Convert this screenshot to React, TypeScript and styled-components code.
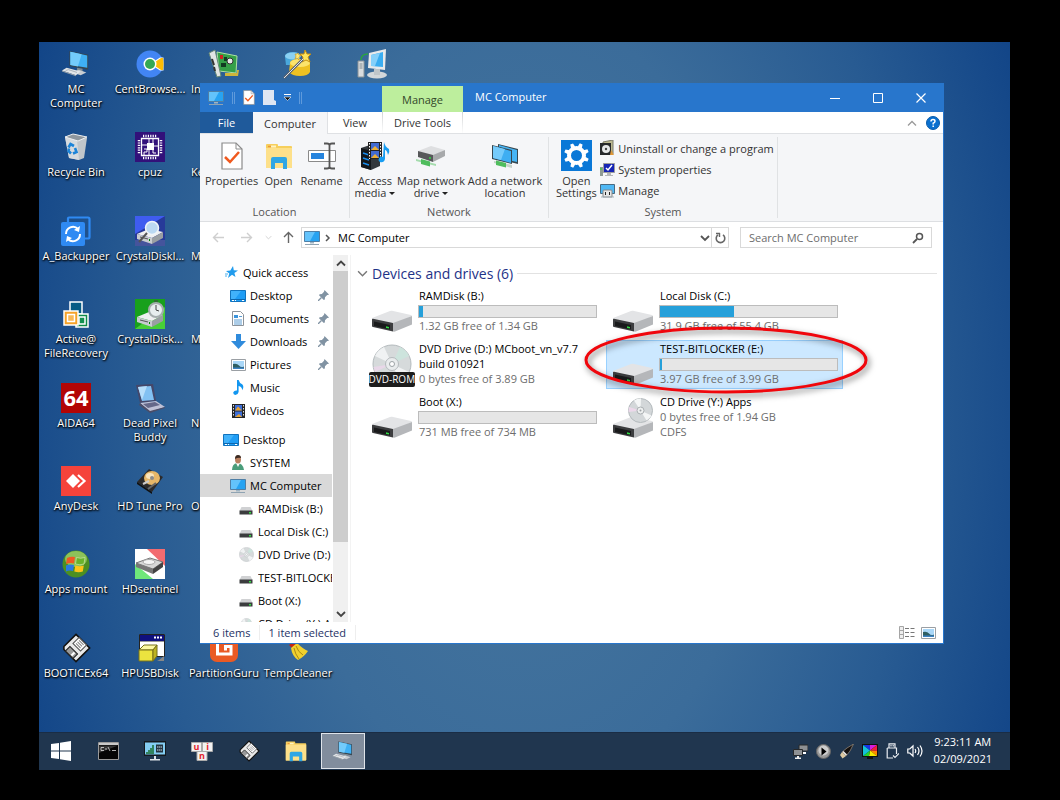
import React from 'react';
import styled, { createGlobalStyle, css } from 'styled-components';

const GlobalStyle = createGlobalStyle`
  * { box-sizing: border-box; }
  body { margin: 0; background: #000; font-family: 'Open Sans', 'Noto Sans', sans-serif; font-size: 11px; color: #000; }
  button, input { font: inherit; color: inherit; }
  button { padding: 0; border: 0; background: none; }
  svg { display: block; flex: none; }
`;

/* ---------- layout ---------- */

const Screen = styled.div`
  display: flex;
  min-height: 100vh;
  padding: 42px 50px 30px 39px;
  background: #000;
`;

const Desktop = styled.main`
  flex: 1;
  min-width: 0;
  display: flex;
  flex-direction: column;
  background: radial-gradient(ellipse 56% 120% at 50% 50%, #47779f 0%, #3b6c9a 45%, #285b92 72%, #114487 100%);
`;

const Workspace = styled.div`
  position: relative;
  flex: 1;
  display: flex;
  padding: 7px 0 16px;
`;

const IconGrid = styled.div`
  display: grid;
  grid-auto-flow: column;
  grid-auto-columns: 74px;
  grid-template-rows: repeat(8, 1fr);
`;

const Shortcut = styled.button`
  display: flex;
  flex-direction: column;
  align-items: center;
  gap: 3px;
  min-height: 0;
  overflow: visible;
`;

const ShortcutArt = styled.span`
  display: flex;
  height: 30px;
  align-items: center;
`;

const ShortcutLabel = styled.span<{ $start?: boolean }>`
  align-self: ${p => (p.$start ? 'flex-start' : 'center')};
  padding-left: ${p => (p.$start ? '4px' : '0')};
  color: #fff;
  line-height: 14px;
  text-align: center;
  white-space: pre;
  text-shadow: 0 1px 2px #000, 1px 1px 2px #000;
`;

const Explorer = styled.section`
  position: absolute;
  inset: 41px 66px 88px 161px;
  display: flex;
  flex-direction: column;
  background: #fff;
  border: solid #2876cc;
  border-width: 0 1px 1px 0;
`;

/* ---------- title bar ---------- */

const TitleBar = styled.header`
  display: flex;
  align-items: stretch;
  height: 29px;
  padding-right: 1px;
  background: #2876cc;
  color: #fff;
`;

const QuickTools = styled.div`
  display: flex;
  align-items: center;
  gap: 8px;
  width: 182px;
  padding-left: 8px;
`;

const Rule = styled.span`
  width: 3px;
  height: 12px;
  border: solid #5f9adb;
  border-width: 0 1px;
`;

const ContextTab = styled.div`
  display: flex;
  align-items: center;
  justify-content: center;
  width: 81px;
  margin-top: 3px;
  background: #bdee9d;
  color: #33482a;
`;

const WindowTitle = styled.h1`
  flex: 1;
  margin: 0;
  padding-left: 12px;
  font-size: 11px;
  font-weight: 400;
  line-height: 28px;
`;

const WindowButton = styled.button`
  display: flex;
  align-items: center;
  justify-content: center;
  width: 43px;
`;

/* ---------- ribbon ---------- */

const TabStrip = styled.nav`
  display: flex;
  height: 22px;
  border-bottom: 1px solid #dfe1e4;
`;

const Tab = styled.button<{ $kind?: 'file' | 'active' | 'context'; $width: number }>`
  width: ${p => p.$width}px;
  color: #333;
  ${p => p.$kind === 'file' && css`background: #1f5a9b; color: #fff;`}
  ${p => p.$kind === 'active' && css`
    background: #f5f6f8;
    margin-bottom: -1px;
    border-right: 1px solid #dfe1e4;
  `}
  ${p => p.$kind === 'context' && css`
    border: solid;
    border-width: 0 1px;
    border-image: linear-gradient(#d0d2d4, #fff) 1;
  `}
`;

const TabEnd = styled.div`
  display: flex;
  align-items: center;
  gap: 9px;
  margin-left: auto;
  padding-right: 3px;
`;

const Ribbon = styled.div`
  display: flex;
  height: 88px;
  padding: 3px 0;
  background: #f5f6f8;
  border-bottom: 1px solid #dddfe2;
`;

const Group = styled.section<{ $width: number }>`
  display: flex;
  flex-direction: column;
  width: ${p => p.$width}px;
  border-right: 1px solid #e0e2e4;
`;

const GroupTools = styled.div`
  flex: 1;
  display: flex;
  justify-content: center;
  padding-top: 2px;
`;

const GroupName = styled.h2`
  margin: 0;
  font-size: 11px;
  font-weight: 400;
  line-height: 12px;
  text-align: center;
  color: #555;
`;

const BigTool = styled.button<{ $width: number }>`
  display: flex;
  flex-direction: column;
  align-items: center;
  gap: 3px;
  width: ${p => p.$width}px;
  color: #333;
  line-height: 12px;
  white-space: pre;
  text-align: center;
`;

const BigArt = styled.span`
  display: flex;
  align-items: center;
  height: 33px;
`;

const ToolList = styled.div`
  display: flex;
  flex-direction: column;
  gap: 5px;
  padding-top: 1px;
`;

const SmallTool = styled.button`
  display: flex;
  align-items: center;
  gap: 3px;
  height: 16px;
  color: #333;
  white-space: nowrap;
`;

const Caret = styled.span`
  display: inline-block;
  margin: 0 0 2px 3px;
  border: solid transparent;
  border-width: 3px 3px 0;
  border-top-color: #222;
`;

/* ---------- address row ---------- */

const AddressRow = styled.div`
  display: flex;
  align-items: center;
  height: 33px;
  padding: 0 11px 2px 12px;
`;

const HistoryButtons = styled.div`
  display: flex;
  align-items: center;
  width: 89px;
`;

const HistoryButton = styled.button<{ $width: number }>`
  display: flex;
  justify-content: flex-start;
  width: ${p => p.$width}px;
`;

const AddressBox = styled.div`
  flex: 1;
  display: flex;
  align-items: center;
  height: 21px;
  padding-left: 2px;
  border: 1px solid #d9d9d9;
`;

const Crumb = styled.span`
  flex: 1;
  padding-left: 4px;
`;

const Refresh = styled.button`
  display: flex;
  align-items: center;
  justify-content: center;
  width: 17px;
  height: 19px;
  margin-left: 1px;
  border-left: 1px solid #d9d9d9;
`;

const SearchBox = styled.label`
  display: flex;
  align-items: center;
  width: 192px;
  height: 21px;
  margin-left: 11px;
  padding: 0 7px 0 8px;
  border: 1px solid #d9d9d9;
`;

const SearchInput = styled.input`
  flex: 1;
  min-width: 0;
  padding: 0;
  border: 0;
  outline: 0;
  background: none;
  &::placeholder { color: #6d6d6d; opacity: 1; }
`;

/* ---------- body ---------- */

const Body = styled.div`
  flex: 1;
  display: flex;
  min-height: 0;
`;

const NavPane = styled.nav`
  width: 132px;
  padding-top: 6px;
  overflow: hidden;
`;

const NavItem = styled.a<{ $indent: number; $selected?: boolean; $spaced?: boolean }>`
  display: flex;
  align-items: center;
  gap: 4px;
  height: 23px;
  margin-top: ${p => (p.$spaced ? '6px' : '0')};
  padding-left: ${p => p.$indent}px;
  background: ${p => (p.$selected ? '#d9d9d9' : 'transparent')};
  color: #000;
  text-decoration: none;
  white-space: nowrap;
`;

const NavArt = styled.span`
  display: flex;
  justify-content: center;
  flex: none;
  width: 16px;
`;

const NavText = styled.span`
  flex: 1;
  min-width: 0;
  overflow: hidden;
`;

const NavPin = styled.span`
  padding-right: 3px;
`;

const ScrollTrack = styled.div`
  display: flex;
  flex-direction: column;
  width: 15px;
  margin-left: 1px;
  background: #f0f0f0;
`;

const ScrollArrow = styled.button`
  display: flex;
  align-items: center;
  justify-content: center;
  height: 16px;
`;

const ScrollThumb = styled.div`
  height: 271px;
  margin-bottom: auto;
  background: #cdcdcd;
`;

const Content = styled.section`
  flex: 1;
  min-width: 0;
  margin-left: 2px;
  padding: 8px 6px 0 6px;
  border-left: 1px solid #f3f3f3;
`;

const SectionHeading = styled.h2`
  display: flex;
  align-items: center;
  gap: 4px;
  margin: 0;
  height: 20px;
  font-size: 14px;
  font-weight: 400;
  color: #1e3287;
  white-space: nowrap;
  &::after { content: ''; flex: 1; height: 1px; background: #e2e2e2; }
`;

const Tiles = styled.div`
  display: grid;
  grid-template-columns: repeat(2, 237px);
  grid-auto-rows: 49px;
  gap: 4px;
  margin: 4px 0 0 8px;
`;

const Tile = styled.article<{ $selected?: boolean }>`
  position: relative;
  display: flex;
  padding: 1px 7px 1px 5px;
  ${p => p.$selected && css`
    background: #cce8ff;
    box-shadow: inset 0 0 0 1px #99d1ff;
  `}
`;

const TileArt = styled.div`
  display: flex;
  align-items: flex-end;
  justify-content: center;
  width: 48px;
  padding: 0 5px 3px 0;
`;

const TileText = styled.div`
  flex: 1;
  min-width: 0;
  line-height: 15px;
  white-space: pre;
`;

const TileName = styled.div`
  padding-left: 1px;
`;

const TileNote = styled.div`
  padding-left: 1px;
  color: #6d6d6d;
`;

const Meter = styled.div`
  width: 179px;
  height: 13px;
  margin: 2px 0 0;
  background: #e6e6e6;
  border: 1px solid #bcbcbc;
`;

const MeterFill = styled.div`
  height: 100%;
  background: #26a0da;
`;

const DiscBadge = styled.div`
  position: relative;
  flex: none;
  width: 46px;
  height: 41px;
  display: flex;
  justify-content: center;
  align-items: flex-start;
`;

const DiscLabel = styled.span`
  position: absolute;
  left: 0;
  right: 0;
  bottom: -2px;
  height: 15px;
  border-radius: 2px;
  background: #1c1c1c;
  color: #fff;
  font-size: 10px;
  line-height: 14px;
  text-align: center;
  white-space: nowrap;
`;

const Highlight = styled.svg`
  position: absolute;
  left: -24px;
  top: -15px;
  z-index: 1;
  filter: drop-shadow(2px 3px 3px rgba(0, 0, 0, 0.55));
  pointer-events: none;
`;

const StatusBar = styled.footer`
  display: flex;
  align-items: center;
  height: 21px;
  padding: 0 7px 0 13px;
  color: #1e3265;
`;

const StatusText = styled.span`
  padding-right: 9px;
  margin-right: 8px;
  border-right: 1px solid #eee;
`;

const ViewButtons = styled.div`
  display: flex;
  gap: 6px;
  margin-left: auto;
`;

/* ---------- taskbar ---------- */

const Taskbar = styled.footer`
  display: flex;
  align-items: stretch;
  height: 38px;
  padding-bottom: 1px;
  background: #20364f;
  border-top: 1px solid #1a2d45;
`;

const TaskButtons = styled.div`
  display: flex;
  gap: 3px;
`;

const TaskButton = styled.button<{ $active?: boolean }>`
  display: flex;
  align-items: center;
  justify-content: center;
  width: 44px;
  ${p => p.$active && css`background: #818d9d; border: 1px solid #dfe4ea;`}
`;

const Tray = styled.div`
  display: flex;
  align-items: center;
  gap: 8px;
  margin-left: auto;
  padding-right: 18px;
`;

const Clock = styled.time`
  margin-left: 3px;
  padding-bottom: 3px;
  color: #fff;
  line-height: 17px;
  text-align: center;
  white-space: pre;
`;

/* ---------- drawings ---------- */

const PC = ({ size = 32 }: { size?: number }) => (
  <svg width={size} height={size} viewBox="0 0 32 32">
    <path d="M9 2 29 6v16L9 18z" fill="#37464f" />
    <path d="M10 3 28 7v13L10 17z" fill="#3fb0f4" />
    <path d="M10 3 22 5.600 18 18.700 10 17z" fill="#73cbfb" />
    <path d="M17 20l6 1v4l-6-1z" fill="#7d8990" />
    <path d="m12 25 7-3 8 3-6 3z" fill="#c8cdd2" />
    <path d="m1 23 5-3 15 4-5 4z" fill="#e2e5e8" />
    <path d="m1 23 15 5v1L1 24z" fill="#9aa3aa" />
    <path d="m5 23 3-1 9 3" fill="none" stroke="#aab1b8" />
  </svg>
);

const Monitor = ({ size = 16 }: { size?: number }) => (
  <svg width={size} height={size} viewBox="0 0 16 16">
    <path d="M.5 1.500h15v10H.5z" fill="#27a3f2" stroke="#4f7fa6" />
    <path d="M1 2h10L6 11H1z" fill="#63c3fb" />
    <path d="M6 12h4v1.500H6z" fill="#9fb4c3" />
    <path d="M1 14.500h14" stroke="#8fa3b2" />
  </svg>
);

const DeskIcon = () => (
  <svg width="16" height="16" viewBox="0 0 16 16">
    <path d="M.5 2.500h15v11H.5z" fill="#1f9df5" stroke="#1273bd" />
    <path d="M1 3h10L5 11H1z" fill="#41b2fb" />
    <path d="M1 11.500h14" stroke="#0d66ad" />
    <path d="M2 12.500h2m1 0h1m6 0h2" stroke="#fff" />
  </svg>
);

const Folder = ({ size }: { size: number }) => (
  <svg width={size} height={size} viewBox="0 0 28 28">
    <path d="M1 3q0-1 1-1h10q1 0 1 1v1h13q1 0 1 1v20q0 1-1 1H1z" fill="#f6cf5c" />
    <path d="M3 3.500h8v2H3z" fill="#fff3c2" />
    <path d="M3 3.500h3v2H3z" fill="#ef9c2e" />
    <path d="M1 6h26v19q0 1-1 1H1z" fill="#fde08a" />
    <path d="M6 27V17q0-2 2-2h12q2 0 2 2v10h-4v-6h-8v6z" fill="#2fa6e4" />
  </svg>
);

const Drive = ({ size = 42 }: { size?: number }) => (
  <svg width={size} height={size * 22 / 42} viewBox="0 0 42 22">
    <path d="M1 8 19 1q1-.5 2-.2L40 5q1 .3 1 1L22 15 1 11z" fill="#e3e4e6" />
    <path d="M22 13 41 6v8.500L24 21.500q-1 .3-2 0z" fill="#b5b7ba" />
    <path d="M1 9.500Q1 8.500 2 8.700L22 13v8.500L2 17q-1-.2-1-1z" fill="#3c3d3f" />
    <path d="M3 11.500 19 15v4.500L3 16z" fill="#191a1b" />
    <path d="M15 16.300l3 .6v1.600l-3-.6z" fill="#31d843" />
  </svg>
);

const MiniDrive = () => (
  <svg width="14" height="14" viewBox="0 0 14 14">
    <path d="M2.500 5h9l2 4h-13z" fill="#d0d1d3" />
    <path d="M.5 8.500h13v4H.5z" fill="#3b3c3e" />
    <path d="M10 10h2v1.500h-2z" fill="#35dd44" />
  </svg>
);

const Disc = ({ size }: { size: number }) => (
  <svg width={size} height={size} viewBox="0 0 40 40">
    <circle cx="20" cy="20" r="19" fill="#d6dadb" stroke="#b4babd" />
    <path d="M20 20 3 12A19 19 0 0 1 12 3z" fill="#f0f2f3" />
    <path d="M20 20 37 28a19 19 0 0 1-9 9z" fill="#f1f3f4" />
    <path d="M20 20 28 3a19 19 0 0 1 9 9z" fill="#cde4dd" />
    <path d="M20 20 3 28 1.500 23z" fill="#e8d7e8" />
    <circle cx="20" cy="20" r="6.500" fill="#e9eced" stroke="#b5babd" />
    <circle cx="20" cy="20" r="2.500" fill="#fff" stroke="#9da3a6" />
  </svg>
);

const CdDrive = () => (
  <svg width="42" height="40" viewBox="0 0 42 40">
    <g transform="translate(0 18)">
      <path d="M1 8 19 1q1-.5 2-.2L40 5q1 .3 1 1L22 15 1 11z" fill="#e3e4e6" />
      <path d="M22 13 41 6v8.500L24 21.500q-1 .3-2 0z" fill="#b5b7ba" />
      <path d="M1 9.500Q1 8.500 2 8.700L22 13v8.500L2 17q-1-.2-1-1z" fill="#3c3d3f" />
      <path d="M3 11.500 19 15v4.500L3 16z" fill="#191a1b" />
      <path d="M15 16.300l3 .6v1.600l-3-.6z" fill="#31d843" />
    </g>
    <circle cx="28.500" cy="12.500" r="12" fill="#d3d7d9" stroke="#b4babd" />
    <path d="M28.500 12.500 22 2.500a12 12 0 0 1 7-2zM28.500 12.500l6 10a12 12 0 0 0 5-5z" fill="#f4f6f6" />
    <path d="M28.500 12.500 17 9l-.5 5z" fill="#ecd8ea" />
    <circle cx="28.500" cy="12.500" r="3.500" fill="#eef0f0" stroke="#abb0b3" />
    <circle cx="28.500" cy="12.500" r="1" fill="#9ea3a6" />
  </svg>
);

const Floppy = ({ size }: { size: number }) => (
  <svg width={size} height={size} viewBox="0 0 28 28">
    <g transform="rotate(45 14 14)">
      <path d="M5 5h18v18H7l-2-2z" fill="#e9e9e9" stroke="#111" strokeWidth="1.500" />
      <path d="M9 5h10v8H9z" fill="#fff" stroke="#555" />
      <path d="M11 7h6m-6 2h6m-6 2h6" stroke="#888" />
      <path d="M9 17h10v6H9z" fill="#999" stroke="#222" />
      <path d="M15 18h2v4h-2z" fill="#fff" />
    </g>
  </svg>
);

const Recycle = () => (
  <svg width="28" height="28" viewBox="0 0 28 28">
    <path d="M3 4l22 1-3 20-5 2-10-2z" fill="#c0c6cb" />
    <path d="M3 4l12 3 2 20-10-2z" fill="#d6dbdf" />
    <path d="m3 4 8-3 14 3-9 4z" fill="#8f979e" stroke="#eef0f2" />
    <g fill="none" stroke="#1c84d8" strokeWidth="2.600">
      <path d="m6.500 14.500 2-3.500 3.500 2M13 15l1.500 4-3.500 1.500M9 20.500 6.500 18l.5-2.500" />
    </g>
  </svg>
);

const CentLogo = () => (
  <svg width="28" height="28" viewBox="0 0 28 28">
    <circle cx="14" cy="14" r="13.500" fill="#4285f4" />
    <path d="M14 14 24 7.500h3.500v13H24z" fill="#fff" />
    <path d="m19 12 6-4h2q1 6 0 12h-2l-6-4z" fill="#fbbc05" />
    <circle cx="14" cy="14" r="6.500" fill="#fff" />
    <circle cx="14" cy="14" r="5" fill="#34a853" />
  </svg>
);

const CpuLogo = () => (
  <svg width="30" height="30" viewBox="0 0 30 30">
    <path d="M0 0h30v30H0z" fill="#32117a" />
    <path d="M6.500 6.500h17v17h-17z" fill="none" stroke="#fff" strokeWidth="1.300" />
    <path d="M12 11h7v7h-7z" fill="#fff" />
    <path d="M8 4h14M8 26h14M4 8v14M26 8v14" stroke="#fff" strokeWidth="2.500" strokeDasharray="1.200 1.200" />
    <path d="M14 7v4m4-4v4M7 13h5m7 1h4M9 17h3v3H9v3m5-5v5m4-5v3h3" fill="none" stroke="#fff" />
  </svg>
);

const Backupper = () => (
  <svg width="30" height="30" viewBox="0 0 30 30">
    <path d="M7 6V2.500q0-1 1-1h19q1.500 0 1.500 1.500v18q0 1.500-1.500 1.500h-3" fill="none" stroke="#2f8af3" strokeWidth="2.200" />
    <rect y="6" width="24" height="24" rx="2" fill="#2f8af3" />
    <path d="M5 18a7 7 0 0 1 12-5M19 18a7 7 0 0 1-12 5" fill="none" stroke="#fff" strokeWidth="2" />
    <path d="m19 10-1 6-5-2zM5 26l1-6 5 2z" fill="#fff" />
  </svg>
);

const DriveShape = ({ y }: { y: number }) => (
  <g transform={`translate(2 ${y})`}>
    <path d="m0 5 12-5 14 3-11 6z" fill="#f0f0f0" />
    <path d="m0 5 15 4v6L0 10z" fill="#c9ccd0" />
    <path d="m15 9 11-6v6l-11 6z" fill="#9a9ea2" />
    <path d="m3 8 8 2" stroke="#555" />
    <path d="M12 11h1" stroke="#080" strokeWidth="2" />
  </g>
);

const CrystalInfo = () => (
  <svg width="30" height="30" viewBox="0 0 30 30">
    <path d="M0 0h30v30H0z" fill="#273a99" />
    <path d="M0 0h30L0 18z" fill="#3f5cf0" />
    <path d="M0 24h30v6H0z" fill="#45549c" />
    <DriveShape y={13} />
    <circle cx="17" cy="12" r="6.500" fill="#bcd9f2" stroke="#f0f4f8" strokeWidth="1.500" />
    <path d="m12 17-8 9" stroke="#555" strokeWidth="2" />
  </svg>
);

const CrystalMark = () => (
  <svg width="30" height="30" viewBox="0 0 30 30">
    <path d="M0 0h30v30H0z" fill="#18a01c" />
    <path d="M0 30h30V8z" fill="#48cf37" />
    <DriveShape y={13} />
    <circle cx="21" cy="11" r="7" fill="#e8eeee" stroke="#a5adad" strokeWidth="2" />
    <path d="M21 11V6m0 5 3 1M19 2h4" stroke="#444" />
  </svg>
);

const ActiveFile = () => (
  <svg width="30" height="30" viewBox="0 0 30 30" stroke="#fff" strokeWidth="1.500">
    <path d="M9 3h12v12H9z" fill="#075c85" />
    <path d="M15 15h12v13H15z" fill="#108a48" />
    <path d="M18 18h6v7h-6z" fill="#138f50" />
    <path d="M3 12h14v14H3z" fill="#f5a32a" />
    <path d="M6.500 15.500h7v7h-7z" fill="#f8b857" />
  </svg>
);

const Aida = () => (
  <svg width="30" height="30" viewBox="0 0 30 30">
    <path d="M0 0h30v30H0z" fill="#b30505" />
    <text x="15" y="23" textAnchor="middle" fontSize="22" fontWeight="700" fontFamily="Open Sans, sans-serif" fill="#fff">64</text>
  </svg>
);

const Laptop = () => (
  <svg width="30" height="30" viewBox="0 0 30 30">
    <path d="m1 2 17-1 3 17L5 20z" fill="#454769" />
    <path d="m3 4 13-1 3 14-12 1z" fill="#82c1f3" />
    <path d="m3 4 9-1-5 14z" fill="#b7defb" />
    <path d="m5 20 16-2 9 6-15 5z" fill="#bfc1d6" />
    <path d="m8 21 12-2 5 3-12 3z" fill="#656889" />
    <path d="m5 20 10 8v2L4 22zM15 28l15-4v1l-15 5z" fill="#4b4d68" />
  </svg>
);

const AnyDesk = () => (
  <svg width="30" height="30" viewBox="0 0 30 30">
    <path d="M0 0h30v30H0z" fill="#f5433b" />
    <path d="m12 8 7 7-7 7-7-7z" fill="#fff" />
    <path d="m17 9 6.500 6-6.500 6" fill="none" stroke="#fff" strokeWidth="2.200" />
  </svg>
);

const HardDisk = () => (
  <svg width="28" height="28" viewBox="0 0 28 28">
    <path d="M13 2 27 10 16 25 1 15z" fill="#2c2a2a" />
    <path d="m1 15 15 10v2L1 17z" fill="#111" />
    <ellipse cx="16" cy="11" rx="8" ry="7" fill="#e7b768" />
    <ellipse cx="14" cy="9" rx="4" ry="3" fill="#fae5bd" />
    <circle cx="16" cy="11" r="2" fill="#8b8b8b" />
    <path d="m7 17 6-3" stroke="#ccc" strokeWidth="2" />
    <path d="m12 22 8-6" stroke="#666" strokeWidth="2" />
  </svg>
);

const WinOrb = () => (
  <svg width="28" height="28" viewBox="0 0 28 28">
    <circle cx="14" cy="14" r="13.500" fill="#4c8f22" />
    <ellipse cx="14" cy="9" rx="11" ry="8" fill="#8dc25a" />
    <path d="M5 8q4-2 8-1l-1 6.500q-4-1-8 .5z" fill="#ee5a24" />
    <path d="M14.500 7.500q4 1.500 8.500 0L22 14q-4 1.500-8.500 0z" fill="#69b32c" stroke="#d8efb8" strokeWidth=".6" />
    <path d="M4 15.500q4-1.500 8-.5l-1 6q-4-1-7 .5z" fill="#2a7ae2" />
    <path d="M13.300 15.500q4 1.500 8.500 0l-1 6q-4 1.500-8.500 0z" fill="#fcc419" />
  </svg>
);

const Sentinel = () => (
  <svg width="30" height="30" viewBox="0 0 30 30">
    <path d="M0 0h30v30H0z" fill="#fff" />
    <path d="M12 0h18v17z" fill="#f26b70" />
    <path d="M0 15v15h18z" fill="#6fe77a" />
    <path d="m1 14 14-5 13 4-10 7z" fill="#d8d8d8" stroke="#777" />
    <path d="m1 14 17 6v5L1 18z" fill="#777" />
    <path d="m18 20 10-7v5l-10 7z" fill="#444" />
    <ellipse cx="14" cy="13" rx="6" ry="2.500" fill="#f5f5f5" stroke="#aaa" />
  </svg>
);

const UsbDisk = () => (
  <svg width="30" height="30" viewBox="0 0 30 30">
    <path d="M4.500 1.500h25v22h-25z" fill="#fff" stroke="#222" />
    <path d="M5 2h24v6H5z" fill="#10107e" />
    <path d="M19 4.500h8" stroke="#fff" strokeWidth="2" strokeDasharray="2 1" />
    <path d="M5 8.500h24" stroke="#999" />
    <path d="m4 17 5-5h13l-4 5z" fill="#fdf9a4" stroke="#77701a" />
    <path d="M4 17h14v11H4z" fill="#ece33f" stroke="#77701a" />
    <path d="m18 17 4-5v11l-4 5z" fill="#bcb323" stroke="#77701a" />
    <path d="M24 27l5-4v5h-7z" fill="#888" />
  </svg>
);

const NicCard = () => (
  <svg width="32" height="30" viewBox="0 0 32 30">
    <path d="m9 3 20 4-1 17-17-2z" fill="#35a048" stroke="#aee0a5" />
    <path d="m1 4 6-3 6 26-4 1z" fill="#e1e5e4" stroke="#687" />
    <path d="M4 10l2 6M6 18l1 4" stroke="#333" strokeWidth="2" />
    <circle cx="22" cy="12" r="3" fill="#e8e8e8" stroke="#333" />
    <path d="M12 6h3v4h-3z" fill="#c22" />
    <path d="M16 8h3v4h-3zM13 14h5v4h-5z" fill="#123b22" />
    <path d="M17 24h12v-3h2l-1 6H17z" fill="#d0b53b" />
  </svg>
);

const Wizard = () => (
  <svg width="30" height="30" viewBox="0 0 30 30">
    <path d="M2 8q0-5 8-5t7 5v8H3z" fill="#49a8dc" />
    <ellipse cx="10" cy="7" rx="8" ry="3.500" fill="#8bd1f3" />
    <path d="M7 14q0-4 10-4t10 4v9q-2 4-10 4T6 23z" fill="#eec122" />
    <ellipse cx="17" cy="14" rx="10" ry="4" fill="#fbe36b" />
    <path d="m22 1 2 4 4 0-3 3 2 5-4-2-4 2 1-5-3-3 4 0z" fill="#fde55c" stroke="#c78f12" />
    <path d="m15 4 1 2 2 .5-2 1.500v3l-2-2-2 1 1-3-1-2h2z" fill="#ffe975" stroke="#c78f12" strokeWidth=".6" />
    <path d="M20 10 1 29" stroke="#5b6471" strokeWidth="2.500" />
    <path d="M20 10 1 29" stroke="#dfe4ea" />
  </svg>
);

const NetPC = () => (
  <svg width="30" height="30" viewBox="0 0 30 30">
    <path d="M1 12h6v16H1z" fill="#dadddf" stroke="#8a9297" />
    <path d="M2.500 15h3m-3 2h3m-3 2h3" stroke="#828b91" />
    <path d="M4 11q0-6 7-6" fill="none" stroke="#2aa442" strokeWidth="1.500" />
    <path d="m12 4 17-4-1 21-17-2z" fill="#e7e9eb" />
    <path d="m14 6 12-3v15l-12-1z" fill="#3aadf1" />
    <path d="m14 6 9-2-5 13h-4z" fill="#85d0fa" />
    <ellipse cx="20" cy="26" rx="10" ry="3.500" fill="#d3d7da" />
    <path d="M17 20h6v6h-6z" fill="#bfc5c9" />
  </svg>
);

const GuruLogo = () => (
  <svg width="28" height="28" viewBox="0 0 28 28">
    <rect width="28" height="28" rx="7" fill="#ea5a24" />
    <path d="M12 6H7.500v14H21v-7.500h-5.500v4M15.500 6.500H21v2.500" fill="none" stroke="#fff" strokeWidth="3" />
  </svg>
);

const Broom = () => (
  <svg width="30" height="30" viewBox="0 0 30 30">
    <path d="m1 3 9 9" stroke="#b6732b" strokeWidth="3" />
    <path d="m6 12 5-4 5 4-5 5z" fill="#c22719" />
    <path d="m8 15 6-5q6 6 11 8-4 6-10 9-6-4-7-12z" fill="#f0d02d" />
    <path d="M11 15q1 6 5 11M13 13q2 6 7 9" stroke="#a98713" fill="none" />
  </svg>
);

const PropsPage = ({ w = 22, h = 28 }: { w?: number; h?: number }) => (
  <svg width={w} height={h} viewBox="0 0 22 28">
    <path d="M1 1h14l6 6v20H1z" fill="#fff" stroke="#8b8b8b" strokeWidth="1.200" />
    <path d="M15 1v6h6" fill="none" stroke="#8b8b8b" />
    <path d="m4 15 5 5 9-10" fill="none" stroke="#f0591e" strokeWidth="2.500" />
  </svg>
);

const BlankPage = () => (
  <svg width="13" height="15" viewBox="0 0 13 15">
    <path d="M0 0h11v10l2 1v4H0z" fill="#dfe6f2" />
  </svg>
);

const RenameArt = () => (
  <svg width="28" height="28" viewBox="0 0 28 28">
    <path d="M.5 8.500h27v11H.5z" fill="#fff" stroke="#8a8a8a" />
    <path d="M3 11h13v6H3z" fill="#2684dd" />
    <path d="M16 1.500h3q2.500 0 2.500 2v21q0 2-2.500 2h-3M27 1.500h-3q-2.500 0-2.500 2M27 26.500h-3q-2.500 0-2.500-2" fill="none" stroke="#555" strokeWidth="1.800" />
  </svg>
);

const MediaArt = () => (
  <svg width="30" height="30" viewBox="0 0 30 30">
    <path d="m1 7 9-3 10 3v18l-9 4-10-3z" fill="#33383d" />
    <path d="m1 7 10 3v19L1 26z" fill="#14181c" />
    <path d="m3 12 6 2m-6 3 6 2m-6 3 6 2" stroke="#188dee" strokeWidth="1.500" />
    <path d="M8 1h14v17H8z" fill="#222" />
    <path d="M11 2h8v7h-8zm0 8h8v7h-8z" fill="#416bd2" />
    <path d="m11 9 4-4 4 4zm0 8 4-4 4 4z" fill="#ecaf35" />
    <path d="M9.500 2v16m11-16v16" stroke="#fff" strokeDasharray="1.500 1.500" />
    <path d="M24 1q1 5 5 7 1 3-1 6-1-5-3-5v9q-1 4-5 3-3-2 0-5 2-1 3 0z" fill="#179df2" />
  </svg>
);

const NetDrive = () => (
  <svg width="30" height="24" viewBox="0 0 30 24">
    <path d="m2 7 13-5 14 4-12 6z" fill="#dedfe1" />
    <path d="m17 11 12-5v6l-12 6z" fill="#a7a9ab" />
    <path d="m2 7 15 4v7L2 13z" fill="#57585a" />
    <path d="M13 14h2" stroke="#31d843" strokeWidth="1.500" />
    <path d="m0 15 20 5v2L0 17z" fill="#a5dcae" />
    <path d="m5 15 9 2.500v5L5 20z" fill="#4fbd5d" />
  </svg>
);

const NetPlace = () => (
  <svg width="28" height="26" viewBox="0 0 28 26">
    <path d="m7 1 20 5v15L7 16z" fill="#37474f" />
    <path d="m8 2 18 5v12L8 15z" fill="#46b4f4" />
    <path d="m1 2 20 5v14L1 16z" fill="#37474f" />
    <path d="m2 3 18 5v12L2 15z" fill="#3eaef2" />
    <path d="m2 3 12 3-4 11-8-2z" fill="#75cbfb" />
    <path d="m3 18 18 4v3L3 20z" fill="#c6d2c9" />
    <path d="m5 17.500 10 2.500v4.500L5 22z" fill="#4fbd5d" />
  </svg>
);

const SettingsArt = () => (
  <svg width="31" height="31" viewBox="0 0 31 31">
    <path d="M0 0h31v31H0z" fill="#0a78d7" />
    <circle cx="15.500" cy="15.500" r="7.500" fill="none" stroke="#fff" strokeWidth="4" />
    <g fill="#fff">
      {[0, 45, 90, 135, 180, 225, 270, 315].map(a => (
        <path key={a} d="M13.300 7l.7-4h3l.7 4z" transform={`rotate(${a + 22} 15.500 15.500)`} />
      ))}
    </g>
  </svg>
);

const UninstallArt = () => (
  <svg width="15" height="16" viewBox="0 0 15 16">
    <path d="M3 2 13 0v14H3z" fill="#bcb98f" stroke="#7b7b6b" />
    <path d="M0 3h11v12H0z" fill="#26282a" />
    <circle cx="6" cy="9" r="4" fill="#e6e8e9" />
    <circle cx="6" cy="9" r="1.200" fill="#444" />
    <path d="m11 10 3 5h-4z" fill="#df9838" />
  </svg>
);

const SysPropsArt = () => (
  <svg width="15" height="15" viewBox="0 0 15 15">
    <path d="M3.500 1.500h11v9h-11z" fill="#1624b5" stroke="#9d9d9d" />
    <path d="m6 6 2 2 4-5" fill="none" stroke="#fff" strokeWidth="1.500" />
    <path d="M7 11h4v2h2v1H5v-1h2z" fill="#b4b6b8" />
    <path d="M0 5h3v9H0z" fill="#8e9a93" />
    <path d="M1 6v2" stroke="#2d2" />
  </svg>
);

const ManageArt = () => (
  <svg width="15" height="15" viewBox="0 0 15 15">
    <path d="M.5 1.500h14v9H.5z" fill="#4fb8f5" stroke="#4b6a80" />
    <path d="M3 8q0-1 1-1h7q1 0 1 1v6H3z" fill="#e6e6e6" stroke="#888" />
    <path d="M5 9h1v3H5zm4 0h1v3H9z" fill="#222" />
    <path d="M1 14h13" stroke="#a8b3bb" />
  </svg>
);

const Chevron = ({ dir, color, w = 10, weight = 1.3 }: { dir: 'up' | 'down'; color: string; w?: number; weight?: number }) => {
  const d = { up: 'M1 7.500 5 3.500 9 7.500', down: 'M1 3 5 7 9 3' }[dir];
  return (
    <svg width={w} height={w} viewBox="0 0 10 10">
      <path d={d} fill="none" stroke={color} strokeWidth={weight} />
    </svg>
  );
};

const Arrow = ({ turn, color }: { turn: number; color: string }) => (
  <svg width="13" height="13" viewBox="0 0 13 13">
    <path d="M12 6.500H1.500M6 2 1.500 6.500 6 11" fill="none" stroke={color} strokeWidth="1.400" transform={`rotate(${turn} 6.500 6.500)`} />
  </svg>
);

const HelpArt = () => (
  <svg width="14" height="14" viewBox="0 0 14 14">
    <circle cx="7" cy="7" r="6.500" fill="#0a70cf" stroke="#0a5caa" />
    <path d="M5 5.500q0-2 2-2t2 1.700Q9 6.500 7.200 7.200V8.500M7.200 9.500V11" fill="none" stroke="#fff" strokeWidth="1.500" />
  </svg>
);

const RefreshArt = () => (
  <svg width="11" height="12" viewBox="0 0 11 12">
    <path d="M8 2.800A4.300 4.300 0 1 1 3 2.800" fill="none" stroke="#666" strokeWidth="1.600" />
    <path d="M4.500 1v4M1 1.500h4" fill="none" stroke="#666" strokeWidth="1.400" />
  </svg>
);

const SearchArt = () => (
  <svg width="12" height="12" viewBox="0 0 12 12">
    <circle cx="7.500" cy="4.500" r="3" fill="none" stroke="#555" strokeWidth="1.500" />
    <path d="M5 7 1 11" stroke="#555" strokeWidth="1.800" />
  </svg>
);

const StarArt = () => (
  <svg width="13" height="13" viewBox="0 0 13 13">
    <path d="m8 0 .8 4.200 4.200.3-3.600 2.400L10.500 11 7 8.700 3 12l1.300-4.600L1 5l4.300-.4z" fill="#219ced" />
    <path d="M0 8h3M0 10h2" stroke="#4ab0ef" />
  </svg>
);

const DocArt = () => (
  <svg width="12" height="15" viewBox="0 0 12 15">
    <path d="M.5.500h8l3 3v11H.5z" fill="#fff" stroke="#8c9299" />
    <path d="M2 4h4v3H2z" fill="#3c94dc" />
    <path d="M7 5.500h3M2 9h8M2 11h8M2 13h8" stroke="#5a9bd1" />
  </svg>
);

const DownArt = () => (
  <svg width="15" height="15" viewBox="0 0 15 15">
    <path d="M5 0h5v7h5l-7.500 8L0 7h5z" fill="#2f8bdc" />
  </svg>
);

const PictureArt = () => (
  <svg width="15" height="12" viewBox="0 0 15 12">
    <path d="M.5.500h14v11H.5z" fill="#fff" stroke="#9a9fa4" />
    <path d="M2 2h11v8H2z" fill="#a9d7f8" />
    <path d="M2 5q4-1 6 1.500t5 1V10H2z" fill="#2f5f63" />
    <path d="M2 8.500h11V10H2z" fill="#3c83c4" />
  </svg>
);

const NoteArt = () => (
  <svg width="11" height="15" viewBox="0 0 11 15">
    <path d="M4 0h1.600q.8 3 3.600 4.300 2.300 2.500 0 6Q9.300 7 5.600 6v6q-.5 2.800-3.300 3Q0 14.500.3 12.300 1.500 10 4 10.500z" fill="#1296f0" />
  </svg>
);

const FilmArt = () => (
  <svg width="13" height="14" viewBox="0 0 13 14">
    <path d="M0 0h13v14H0z" fill="#252525" />
    <path d="M3 1h7v5.500H3zM3 7.500h7V13H3z" fill="#3e6fd8" />
    <path d="m3 6.500 3-4 4 4zM3 13l4-3 3 3z" fill="#e7a22e" />
    <path d="M1.500 1v12m10-12v12" stroke="#ddd" strokeDasharray="1.500 1.500" />
  </svg>
);

const UserArt = () => (
  <svg width="12" height="15" viewBox="0 0 12 15">
    <path d="M0 15q0-6 5-7 6 0 7 7z" fill="#4a9d7b" />
    <path d="m4 8 2 4 2-4z" fill="#fff" />
    <ellipse cx="6" cy="4.500" rx="3" ry="4" fill="#b97f5f" />
    <path d="M3 4q0-4 3-4t3 3Q6 2 3 4z" fill="#3b2a22" />
  </svg>
);

const PinArt = () => (
  <svg width="11" height="11" viewBox="0 0 11 11">
    <path d="m6.500 0 4.500 4.500-1 .6-.8-.1L7 7.200 6.800 9.500l-1 .5L1 5.200l.6-1 2.300-.2L6 1.800z" fill="#8193a3" />
    <path d="M3.500 7.500 0 11" stroke="#8193a3" strokeWidth="1.300" />
  </svg>
);

const ListView = () => (
  <svg width="16" height="13" viewBox="0 0 16 13">
    <path d="M.5.500h4v12h-4zM.5 4.500h4m-4 4h4" fill="#eee" stroke="#a5a5a5" />
    <path d="M6 2.500h10M6 6.500h10M6 10.500h10" stroke="#777" strokeDasharray="4 1.500" />
  </svg>
);

const StartArt = () => (
  <svg width="20" height="20" viewBox="0 0 20 20" fill="#fff">
    <path d="M0 3 8 2v7.500H0zM9 1.800 20 0v9.500H9zM0 10.500h8V18l-8-1zM9 10.500h11V20L9 18.200z" />
  </svg>
);

const ConsoleArt = () => (
  <svg width="21" height="18" viewBox="0 0 21 18">
    <path d="M.5.500h20v17H.5z" fill="#050505" stroke="#9a9a9a" />
    <path d="M1 1h19v2H1z" fill="#c9c9c9" />
    <path d="M1 3.500h19L1 11z" fill="#333" />
    <path d="M6 5.500H3v3h3M8 6v2M10 5l2 4M14 8.500h4" fill="none" stroke="#ddd" strokeWidth=".8" />
  </svg>
);

const PerfArt = () => (
  <svg width="22" height="20" viewBox="0 0 22 20">
    <path d="M0 0h22v15H0z" fill="#14191e" />
    <path d="M1 1.500h20v12H1z" fill="#83cdf2" />
    <path d="M3 13v-2M5 13V9M7 13V7M9 13V4" stroke="#176c2e" strokeWidth="1.500" />
    <path d="M12 3.500h7v8h-7z" fill="#243440" />
    <path d="M13 6h5m-5 3h5" stroke="#c9dce8" strokeDasharray="1.500 .5" />
    <path d="M10 15h2v3h4v1.500H6V18h4z" fill="#dce2e7" />
  </svg>
);

const KeysArt = () => (
  <svg width="22" height="19" viewBox="0 0 22 19" fontFamily="Open Sans, sans-serif" fontWeight="700" fontSize="9" fill="#e2262c" textAnchor="middle">
    <path d="M.5.500h10v9H.5zM11.500.500h10v9h-10zM6 9.500h10v9H6z" fill="#f2f2f2" stroke="#aaa" />
    <text x="5.500" y="7.500">u</text>
    <text x="16.500" y="8">i</text>
    <text x="11" y="16.500">n</text>
  </svg>
);

const TrayNet = () => (
  <svg width="15" height="15" viewBox="0 0 15 15">
    <path d="M6 1h9v6H6z" fill="#8d9093" stroke="#26282a" />
    <path d="M9 8h4v2H9z" fill="#fff" />
    <path d="M.5 5.500h9v6h-9z" fill="#8d9093" stroke="#26282a" />
    <path d="M4 12h2v1.500h2V15H2v-1.500h2z" fill="#eee" />
  </svg>
);

const TrayPlay = () => (
  <svg width="15" height="15" viewBox="0 0 15 15">
    <circle cx="7.500" cy="7.500" r="7" fill="#999" stroke="#666" />
    <circle cx="7.500" cy="6.500" r="5" fill="#ccc" />
    <path d="m5.500 3.500 5 4-5 4z" fill="#000" />
  </svg>
);

const TrayPlug = () => (
  <svg width="15" height="15" viewBox="0 0 15 15">
    <path d="m14.500 0-1 2-2.500 5-4 5-4-4 5-4z" fill="#14100e" stroke="#8e8273" strokeWidth=".8" />
    <path d="m3 8 4 4-3.500 2.500L1 11z" fill="#dcc9a2" />
    <path d="m4 7.500 3.500 3.500" stroke="#f2f2f2" strokeWidth="1.500" />
  </svg>
);

const TrayColor = () => (
  <svg width="16" height="15" viewBox="0 0 16 15">
    <path d="M0 0h16v13H0zM5 13h6v2H5z" fill="#111" />
    <path d="M8 6.500 1 1h7z" fill="#1833e6" />
    <path d="M8 6.500V1h7z" fill="#d71ce0" />
    <path d="m8 6.500 7-5.500v6z" fill="#f0203e" />
    <path d="m8 6.500 7 .5v5z" fill="#ff8a00" />
    <path d="m8 6.500 7 5.500H7z" fill="#f7e800" />
    <path d="M8 6.500 7 12H1z" fill="#25d430" />
    <path d="M8 6.500 1 12V1z" fill="#14c3d8" />
  </svg>
);

const TrayUsb = () => (
  <svg width="13" height="16" viewBox="0 0 13 16" fill="none" stroke="#e9edf2" strokeWidth="1.200">
    <path d="M3 5V.8h6V5M1.200 5h9.300v6M1.200 5v10H7M5 2v1.500M7.200 2v1.500" />
    <path d="m7 12.500 2 2 4-4" />
  </svg>
);

const TraySound = () => (
  <svg width="16" height="14" viewBox="0 0 16 14" fill="none" stroke="#fff" strokeWidth="1.200">
    <path d="M.8 5h2L6 2v10L2.800 9h-2zM8 5q1.500 2 0 4M10.500 3q3 4 0 8M13 1.500q4 5.500 0 11" />
  </svg>
);

/* ---------- data ---------- */

type Entry = { label: string; art?: React.ReactNode; start?: boolean };

const shortcuts: Entry[] = [
  { label: 'MC\nComputer', art: <PC size={30} /> },
  { label: 'Recycle Bin', art: <Recycle /> },
  { label: 'A_Backupper', art: <Backupper /> },
  { label: 'Active@\nFileRecovery', art: <ActiveFile /> },
  { label: 'AIDA64', art: <Aida /> },
  { label: 'AnyDesk', art: <AnyDesk /> },
  { label: 'Apps mount', art: <WinOrb /> },
  { label: 'BOOTICEx64', art: <Floppy size={30} /> },
  { label: 'CentBrowse...', art: <CentLogo /> },
  { label: 'cpuz', art: <CpuLogo /> },
  { label: 'CrystalDiskI...', art: <CrystalInfo /> },
  { label: 'CrystalDisk...', art: <CrystalMark /> },
  { label: 'Dead Pixel\nBuddy', art: <Laptop /> },
  { label: 'HD Tune Pro', art: <HardDisk /> },
  { label: 'HDsentinel', art: <Sentinel /> },
  { label: 'HPUSBDisk', art: <UsbDisk /> },
  { label: 'In', art: <NicCard />, start: true },
  { label: 'Ke', start: true },
  { label: 'M', start: true },
  { label: 'M', start: true },
  { label: 'N', start: true },
  { label: 'O', start: true },
  { label: '' },
  { label: 'PartitionGuru', art: <GuruLogo /> },
  { label: '', art: <Wizard /> },
  { label: '' }, { label: '' }, { label: '' }, { label: '' }, { label: '' }, { label: '' },
  { label: 'TempCleaner', art: <Broom /> },
  { label: '', art: <NetPC /> },
];

type Nav = { label: string; art: React.ReactNode; indent: number; pin?: boolean; selected?: boolean; spaced?: boolean };

const places: Nav[] = [
  { label: 'Quick access', art: <StarArt />, indent: 23 },
  { label: 'Desktop', art: <DeskIcon />, indent: 30, pin: true },
  { label: 'Documents', art: <DocArt />, indent: 30, pin: true },
  { label: 'Downloads', art: <DownArt />, indent: 30, pin: true },
  { label: 'Pictures', art: <PictureArt />, indent: 30, pin: true },
  { label: 'Music', art: <NoteArt />, indent: 30 },
  { label: 'Videos', art: <FilmArt />, indent: 30 },
  { label: 'Desktop', art: <DeskIcon />, indent: 23, spaced: true },
  { label: 'SYSTEM', art: <UserArt />, indent: 30 },
  { label: 'MC Computer', art: <Monitor />, indent: 30, selected: true },
  { label: 'RAMDisk (B:)', art: <MiniDrive />, indent: 38 },
  { label: 'Local Disk (C:)', art: <MiniDrive />, indent: 38 },
  { label: 'DVD Drive (D:)', art: <Disc size={15} />, indent: 38 },
  { label: 'TEST-BITLOCKER (E:)', art: <MiniDrive />, indent: 38 },
  { label: 'Boot (X:)', art: <MiniDrive />, indent: 38 },
  { label: 'CD Drive (Y:) Apps', art: <Disc size={11} />, indent: 38 },
];

type Volume = { name: string; notes: string; used?: number; art: React.ReactNode; selected?: boolean };

const DvdRom = () => (
  <DiscBadge>
    <Disc size={40} />
    <DiscLabel>DVD-ROM</DiscLabel>
  </DiscBadge>
);

const volumes: Volume[] = [
  { name: 'RAMDisk (B:)', notes: '1.32 GB free of 1.34 GB', used: 2, art: <Drive /> },
  { name: 'Local Disk (C:)', notes: '31.9 GB free of 55.4 GB', used: 42, art: <Drive /> },
  { name: 'DVD Drive (D:) MCboot_vn_v7.7\nbuild 010921', notes: '0 bytes free of 3.89 GB', art: <DvdRom /> },
  { name: 'TEST-BITLOCKER (E:)', notes: '3.97 GB free of 3.99 GB', used: 1, art: <Drive />, selected: true },
  { name: 'Boot (X:)', notes: '731 MB free of 734 MB', used: 0, art: <Drive /> },
  { name: 'CD Drive (Y:) Apps', notes: '0 bytes free of 1.94 GB\nCDFS', art: <CdDrive /> },
];

/* ---------- page ---------- */

export default function App() {
  return (
    <Screen>
      <GlobalStyle />
      <Desktop>
        <Workspace>
          <IconGrid>
            {shortcuts.map((s, i) =>
              s.label || s.art ? (
                <Shortcut key={i}>
                  <ShortcutArt>{s.art}</ShortcutArt>
                  <ShortcutLabel $start={s.start}>{s.label}</ShortcutLabel>
                </Shortcut>
              ) : (
                <span key={i} />
              ),
            )}
          </IconGrid>

          <Explorer>
            <TitleBar>
              <QuickTools>
                <Monitor />
                <Rule />
                <PropsPage w={12} h={15} />
                <BlankPage />
                <svg width="7" height="9" viewBox="0 0 7 9">
                  <path d="M0 1.500h7" stroke="#fff" />
                  <path d="M0 4h7L3.500 7.500z" fill="#111" stroke="#fff" strokeWidth=".6" />
                </svg>
                <Rule />
              </QuickTools>
              <ContextTab>Manage</ContextTab>
              <WindowTitle>MC Computer</WindowTitle>
              <WindowButton aria-label="Minimize">
                <svg width="10" height="10" viewBox="0 0 10 10"><path d="M0 5.500h10" stroke="#fff" /></svg>
              </WindowButton>
              <WindowButton aria-label="Maximize">
                <svg width="10" height="10" viewBox="0 0 10 10"><path d="M.5.500h9v9h-9z" fill="none" stroke="#fff" /></svg>
              </WindowButton>
              <WindowButton aria-label="Close">
                <svg width="10" height="10" viewBox="0 0 10 10"><path d="m.5.500 9 9m0-9-9 9" stroke="#fff" strokeWidth="1.200" /></svg>
              </WindowButton>
            </TitleBar>

            <TabStrip>
              <Tab $kind="file" $width={53}>File</Tab>
              <Tab $kind="active" $width={75}>Computer</Tab>
              <Tab $width={54}>View</Tab>
              <Tab $kind="context" $width={81}>Drive Tools</Tab>
              <TabEnd>
                <Chevron dir="up" color="#9a9a9a" />
                <HelpArt />
              </TabEnd>
            </TabStrip>

            <Ribbon>
              <Group $width={150}>
                <GroupTools>
                  <BigTool $width={54}><BigArt><PropsPage /></BigArt>Properties</BigTool>
                  <BigTool $width={40}><BigArt><Folder size={28} /></BigArt>Open</BigTool>
                  <BigTool $width={46}><BigArt><RenameArt /></BigArt>Rename</BigTool>
                </GroupTools>
                <GroupName>Location</GroupName>
              </Group>
              <Group $width={199}>
                <GroupTools>
                  <BigTool $width={42}><BigArt><MediaArt /></BigArt><span>Access{'\n'}media<Caret /></span></BigTool>
                  <BigTool $width={70}><BigArt><NetDrive /></BigArt><span>Map network{'\n'}drive<Caret /></span></BigTool>
                  <BigTool $width={78}><BigArt><NetPlace /></BigArt>{'Add a network\nlocation'}</BigTool>
                </GroupTools>
                <GroupName>Network</GroupName>
              </Group>
              <Group $width={229}>
                <GroupTools>
                  <BigTool $width={48}><BigArt><SettingsArt /></BigArt>{'Open\nSettings'}</BigTool>
                  <ToolList>
                    <SmallTool><UninstallArt />Uninstall or change a program</SmallTool>
                    <SmallTool><SysPropsArt />System properties</SmallTool>
                    <SmallTool><ManageArt />Manage</SmallTool>
                  </ToolList>
                </GroupTools>
                <GroupName>System</GroupName>
              </Group>
            </Ribbon>

            <AddressRow>
              <HistoryButtons>
                <HistoryButton $width={28} aria-label="Back"><Arrow turn={0} color="#cfcfcf" /></HistoryButton>
                <HistoryButton $width={25} aria-label="Forward"><Arrow turn={180} color="#cfcfcf" /></HistoryButton>
                <HistoryButton $width={17} aria-label="Recent"><Chevron dir="down" color="#cfcfcf" w={7} /></HistoryButton>
                <HistoryButton $width={19} aria-label="Up"><Arrow turn={90} color="#666" /></HistoryButton>
              </HistoryButtons>
              <AddressBox>
                <Monitor />
                <svg width="14" height="10" viewBox="0 0 14 10"><path d="m6 2 3 3-3 3" fill="none" stroke="#555" strokeWidth="1.500" /></svg>
                <Crumb>MC Computer</Crumb>
                <Chevron dir="down" color="#555" weight={1.8} />
                <Refresh aria-label="Refresh"><RefreshArt /></Refresh>
              </AddressBox>
              <SearchBox>
                <SearchInput type="text" placeholder="Search MC Computer" aria-label="Search MC Computer" />
                <SearchArt />
              </SearchBox>
            </AddressRow>

            <Body>
              <NavPane>
                {places.map((p, i) => (
                  <NavItem key={i} href="#" $indent={p.indent} $selected={p.selected} $spaced={p.spaced}>
                    <NavArt>{p.art}</NavArt>
                    <NavText>{p.label}</NavText>
                    {p.pin && <NavPin><PinArt /></NavPin>}
                  </NavItem>
                ))}
              </NavPane>
              <ScrollTrack>
                <ScrollArrow aria-label="Scroll up"><Chevron dir="up" color="#444" weight={1.8} /></ScrollArrow>
                <ScrollThumb />
                <ScrollArrow aria-label="Scroll down"><Chevron dir="down" color="#444" weight={1.8} /></ScrollArrow>
              </ScrollTrack>
              <Content>
                <SectionHeading><Chevron dir="down" color="#777" w={11} />Devices and drives (6)</SectionHeading>
                <Tiles>
                  {volumes.map(v => (
                    <Tile key={v.name} $selected={v.selected}>
                      <TileArt>{v.art}</TileArt>
                      <TileText>
                        <TileName>{v.name}</TileName>
                        {v.used !== undefined && <Meter><MeterFill style={{ width: `${v.used}%` }} /></Meter>}
                        <TileNote>{v.notes}</TileNote>
                      </TileText>
                      {v.selected && (
                        <Highlight width="288" height="72" viewBox="0 0 288 72">
                          <ellipse cx="144" cy="35" rx="140" ry="32" fill="none" stroke="#f0060c" strokeWidth="3" />
                        </Highlight>
                      )}
                    </Tile>
                  ))}
                </Tiles>
              </Content>
            </Body>

            <StatusBar>
              <StatusText>6 items</StatusText>
              <StatusText>1 item selected</StatusText>
              <ViewButtons>
                <button aria-label="Details"><ListView /></button>
                <button aria-label="Large icons"><PictureArt /></button>
              </ViewButtons>
            </StatusBar>
          </Explorer>
        </Workspace>

        <Taskbar>
          <TaskButtons>
            <TaskButton aria-label="Start"><StartArt /></TaskButton>
            <TaskButton aria-label="Console"><ConsoleArt /></TaskButton>
            <TaskButton aria-label="Performance"><PerfArt /></TaskButton>
            <TaskButton aria-label="Keyboard"><KeysArt /></TaskButton>
            <TaskButton aria-label="Boot tool"><Floppy size={22} /></TaskButton>
            <TaskButton aria-label="Files"><Folder size={22} /></TaskButton>
            <TaskButton aria-label="MC Computer" $active><PC size={22} /></TaskButton>
          </TaskButtons>
          <Tray>
            <TrayNet />
            <TrayPlay />
            <TrayPlug />
            <TrayColor />
            <TrayUsb />
            <TraySound />
            <Clock>{'9:23:11 AM\n02/09/2021'}</Clock>
          </Tray>
        </Taskbar>
      </Desktop>
    </Screen>
  );
}
